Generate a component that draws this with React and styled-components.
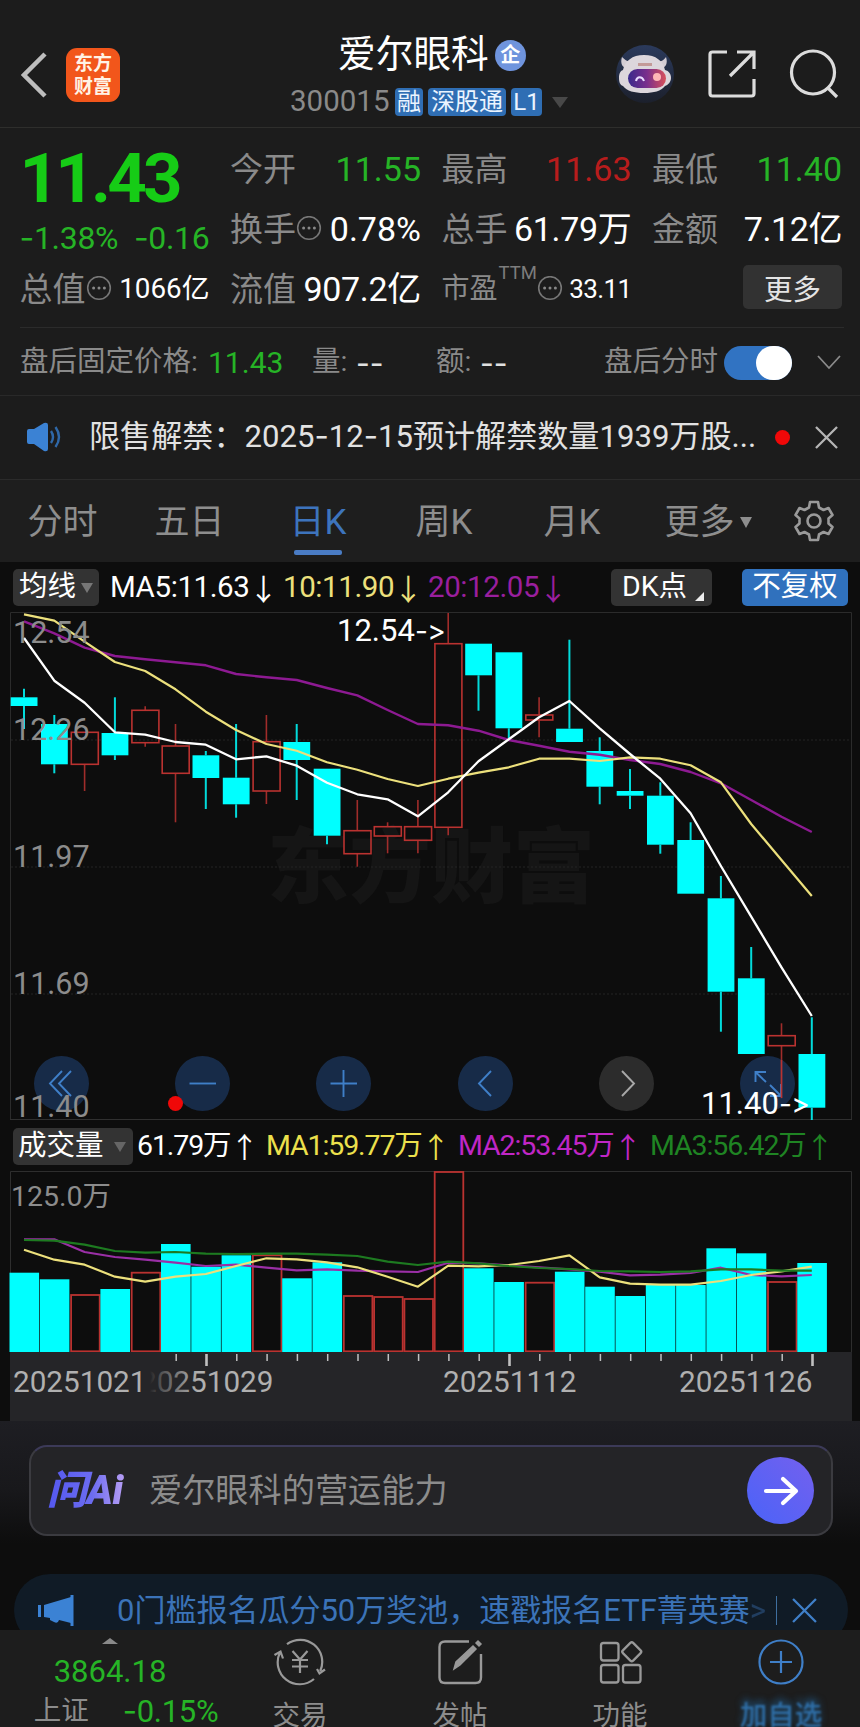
import React from 'react';
import styled, { createGlobalStyle, css } from 'styled-components';

const UP = '#ba3230';
const DOWN = '#00ffff';
const GREEN = '#26b426';
const FONT = "Roboto, 'Noto Sans CJK SC', sans-serif";

const STEP = 30.3;
const px = (i) => 24 + i * STEP;

// [type, bodyTop, bodyBottom, high, low, volumeTop, volumeType]
const candles = [
    ['d', 697.3, 706, 688.7, 729, 1272.7],
    ['d', 724, 764.3, 715, 773.3, 1279.3],
    ['u', 732.3, 764.3, 732.3, 791, 1295],
    ['d', 733, 755.3, 697.3, 760, 1289],
    ['u', 710.3, 742.7, 706.3, 746.7, 1272.7],
    ['u', 746, 773.3, 724, 822.3, 1244, 'd'],
    ['d', 755.3, 778, 751, 809, 1266.7],
    ['d', 777.7, 804.3, 724, 817.7, 1255.3],
    ['u', 741.7, 791, 715, 804, 1255.3],
    ['d', 742, 760, 724, 800, 1278.3],
    ['d', 768.7, 835.7, 768.7, 844.3, 1262.3],
    ['u', 830.7, 853.7, 800, 866.7, 1296],
    ['u', 826.7, 836, 822.3, 853.3, 1297],
    ['u', 826.7, 840.3, 800, 853.3, 1299],
    ['u', 643.7, 827.3, 613, 835.3, 1172],
    ['d', 643.7, 675.3, 643.7, 710.7, 1268.3],
    ['d', 652.3, 728.3, 652.3, 738, 1282],
    ['u', 715, 720, 697.3, 737.3, 1282.7],
    ['d', 728.7, 742, 639.7, 742, 1271.7],
    ['d', 751, 786.7, 737.3, 804.3, 1286.7],
    ['d', 791, 795.7, 769, 809, 1296],
    ['d', 795.7, 844.7, 782.3, 853.7, 1285],
    ['d', 840, 893.7, 822.3, 893.7, 1285],
    ['d', 898.3, 991.7, 876, 1031.7, 1248.3],
    ['d', 978.3, 1054, 947, 1054, 1253.3],
    ['u', 1035.7, 1045.7, 1023.3, 1098.3, 1282],
    ['d', 1054, 1107.7, 1017.3, 1120, 1263]
];

const ma5 = [638, 680.7, 702.7, 732.3, 734.7, 742, 744.7, 759.3, 756.3, 765.7, 782.7, 794.3, 799.3, 816.3, 792.3, 761.3, 739.3, 717.3, 701, 728.3, 754, 778.7, 813.3, 866, 916.7, 967.3, 1016];
const ma10 = [614.3, 620.7, 641.7, 662, 671, 689.3, 711.7, 730, 744, 750.7, 762.3, 769.7, 779, 786, 778.7, 772.7, 767.3, 758.7, 758.7, 761, 757.3, 758.7, 765.3, 782.3, 824, 860, 896];
const ma20 = [621.3, 633.3, 647.7, 656, 659.3, 662.3, 665.3, 674, 677.3, 680, 688, 695.3, 710, 724, 725.3, 730.7, 740, 745.7, 751.7, 754.7, 760, 764, 772, 783.3, 800, 816.7, 832];
const vol1 = [1249.7, 1259.7, 1264.7, 1276.7, 1281.7, 1276.7, 1274, 1266, 1258.3, 1259.3, 1262.3, 1267.3, 1276.7, 1286.7, 1265.7, 1266.3, 1265, 1261, 1255.3, 1277.3, 1283.7, 1284.7, 1284.7, 1281, 1275, 1271.3, 1266.7];
const vol2 = [1239.3, 1239.3, 1252, 1257, 1259.7, 1262.7, 1266, 1264.7, 1267.7, 1270.3, 1269.3, 1270.7, 1271.3, 1272, 1262.7, 1263.3, 1265.3, 1267.3, 1269.3, 1271.7, 1275.3, 1274.7, 1273, 1267.7, 1275, 1276.3, 1275];
const vol3 = [1240, 1240.7, 1244.7, 1251, 1252.7, 1252, 1253.7, 1254, 1253.7, 1253.7, 1254.7, 1256, 1261.7, 1265, 1261.7, 1263.3, 1266, 1268, 1269, 1271, 1271.3, 1272, 1271.3, 1269.3, 1269.3, 1270.7, 1270.7];

const Line = ({ data, color, width = 2 }) => (
    <polyline
        points={data.map((y, i) => `${px(i)},${y}`).join(' ')}
        fill="none"
        stroke={color}
        strokeWidth={width}
        strokeLinejoin="round"
    />
);

const Candle = ({ item, index }) => {
    const [type, top, bottom, high, low] = item;
    const x = px(index);
    const color = type === 'u' ? UP : DOWN;
    return (
        <g stroke={color} strokeWidth={type === 'u' ? 1.6 : 2}>
            <line x1={x} x2={x} y1={high} y2={top} opacity="0.85" />
            <line x1={x} x2={x} y1={bottom} y2={low} opacity="0.85" />
            {type === 'u' ? (
                <rect x={x - 13.3} y={top} width="27" height={bottom - top} fill="none" />
            ) : (
                <rect x={x - 13.3} y={top} width="26.8" height={bottom - top} fill={color} stroke="none" />
            )}
        </g>
    );
};

const KLineChart = () => (
    <Svg viewBox="0 612 860 508" width="860" height="508">
        <text x="267" y="896" fontSize="82" fontWeight="900" fill="#151515">
            东方财富
        </text>
        <path d="M10.5 1120 V612.5 H851.5 V1120" fill="none" stroke="#2b2b2b" />
        <line x1="10" x2="852" y1="1119.5" y2="1119.5" stroke="#303030" />
        <g stroke="#242424" strokeDasharray="2 2">
            <line x1="11" x2="851" y1="740" y2="740" />
            <line x1="11" x2="851" y1="867" y2="867" />
            <line x1="11" x2="851" y1="994" y2="994" />
        </g>
        {candles.map((item, index) => (
            <Candle key={index} item={item} index={index} />
        ))}
        <Line data={ma20} color="#8d1a92" width={2.4} />
        <Line data={ma10} color="#ece07c" width={2.2} />
        <Line data={ma5} color="#ffffff" width={2.3} />
        <g fontSize="30.5" fill="#8c8c8c">
            <text x="13" y="642.5">12.54</text>
            <text x="13" y="739.5">12.26</text>
            <text x="13" y="867">11.97</text>
            <text x="13" y="994">11.69</text>
        </g>
        <text x="337" y="641" fontSize="31" fill="#fff">
            12.54<Pointer fontSize="28">-&gt;</Pointer>
        </text>
    </Svg>
);

const VolumeChart = () => (
    <Svg viewBox="0 1171 860 181" width="860" height="181">
        <path d="M10.5 1352 V1171.5 H851.5 V1352" fill="none" stroke="#2e2e2e" />
        {candles.map(([type, , , , , top, volType = type], i) =>
            volType === 'u' ? (
                <rect key={i} x={px(i) - 13.5} y={top} width="28.6" height={1351.3 - top} fill="none" stroke={UP} strokeWidth="1.8" />
            ) : (
                <rect key={i} x={px(i) - 14.5} y={top} width="29.6" height={1352 - top} fill={DOWN} />
            )
        )}
        <Line data={vol2} color="#9a2fa6" width={2.2} />
        <Line data={vol1} color="#ece07c" width={2.2} />
        <Line data={vol3} color="#1d7a20" width={2.2} />
        <text x="11" y="1205.500" fontSize="28.500" fill="#8c8c8c">
            125.0万
        </text>
    </Svg>
);

const DateAxis = () => (
    <Svg viewBox="0 1352 860 69" width="860" height="69">
        <defs>
            <linearGradient id="dateFade" gradientUnits="userSpaceOnUse" x1="150" x2="198" y1="0" y2="0">
                <stop offset="0" stopColor="#b0b0b0" stopOpacity="0" />
                <stop offset="0.15" stopColor="#b0b0b0" stopOpacity="0.25" />
                <stop offset="1" stopColor="#b0b0b0" />
            </linearGradient>
        </defs>
        <rect x="10" y="1352" width="842" height="69" fill="#252528" />
        {candles.map((_, i) => {
            if (i < 5) return null;
            const major = i % 10 === 6;
            return (
                <line
                    key={i}
                    x1={px(i) + 0.7}
                    x2={px(i) + 0.7}
                    y1="1354"
                    y2={major ? 1366 : 1361}
                    stroke="#c0c0c0"
                    strokeWidth={major ? 2.6 : 1.5}
                />
            );
        })}
        <g fontSize="29.7" fill="#b0b0b0">
            <text x="13" y="1392">20251021</text>
            <text x="140" y="1392" fill="url(#dateFade)">20251029</text>
            <text x="443" y="1392">20251112</text>
            <text x="679" y="1392">20251126</text>
        </g>
    </Svg>
);

const More = () => (
    <svg width="26" height="26" viewBox="0 0 26 26">
        <circle cx="13" cy="12" r="11.3" fill="none" stroke="#777" strokeWidth="1.6" />
        <g fill="#888">
            <circle cx="7.6" cy="12" r="1.5" />
            <circle cx="13" cy="12" r="1.5" />
            <circle cx="18.4" cy="12" r="1.5" />
        </g>
    </svg>
);

const Cross = ({ size, color, width = 2.4 }) => (
    <svg width={size} height={size} viewBox="0 0 24 24">
        <path d="M1 1 23 23M23 1 1 23" stroke={color} strokeWidth={width} fill="none" />
    </svg>
);

const Robot = () => (
    <svg width="60" height="60" viewBox="0 0 60 60">
        <defs>
            <linearGradient id="visor">
                <stop offset="0" stopColor="#3a2a8c" />
                <stop offset="0.5" stopColor="#7a2f8c" />
                <stop offset="1" stopColor="#d8505a" />
            </linearGradient>
            <linearGradient id="halo" x2="0" y2="1">
                <stop offset="0" stopColor="#2b3a5c" />
                <stop offset="1" stopColor="#1c202c" />
            </linearGradient>
        </defs>
        <circle cx="30" cy="30" r="29" fill="url(#halo)" />
        <path d="M7 13c-2 6 0 11 6 12l6-7c-6 0-9-2-12-5zM51 13c2 6 0 11-6 12l-5-7c6 0 9-2 11-5z" fill="#d3cdd4" />
        <path d="M29 11c12 0 19 6 21 15 4 1 6 4 6 8s-3 7-6 8c-4 5-11 7-21 7s-17-2-21-7c-3-1-4-4-4-8s1-7 4-8c2-9 9-15 21-15z" fill="#dcd6dc" />
        <path d="M23 19h14v3H23z" fill="#c39a98" />
        <rect x="13" y="25" width="38" height="19" rx="9.5" fill="url(#visor)" />
        <path d="M21 37c1-5 6-5 8 0" stroke="#e8dcff" strokeWidth="2" fill="none" />
        <circle cx="42" cy="33" r="4" fill="#ffb6b6" />
    </svg>
);

const tabs = ['分时', '五日', '日K', '周K', '月K'];

const tools = [
    { d: 'M28 15 16 27.500 28 40M37 15 25 27.500 37 40', name: 'first' },
    { d: 'M14.500 27.500H41', name: 'out' },
    { d: 'M14.500 27.500H41M27.500 14V41', name: 'in' },
    { d: 'M33 15 21 27.500 33 40', name: 'prev' },
    { d: 'M23 15 35 27.500 23 40', name: 'next', dark: true },
    { d: 'M26 16H15.500V26M15.500 16 26 26M41 28V40H30M30 29 41 40', name: 'full' }
];

const App = () => {
    return (
        <Page>
            <GlobalStyle />
            <Header>
                <HeaderLeft>
                    <svg width="26" height="46" viewBox="0 0 26 46">
                        <path d="M24 2 3 23 24 44" fill="none" stroke="#bdbdbd" strokeWidth="4.500" />
                    </svg>
                    <AppLogo>
                        东方
                        <br />
                        财富
                    </AppLogo>
                </HeaderLeft>
                <TitleBox>
                    <TitleRow>
                        爱尔眼科<Badge>企</Badge>
                    </TitleRow>
                    <CodeRow>
                        <Code>300015</Code>
                        <Tag $w={28}>融</Tag>
                        <Tag $w={78}>深股通</Tag>
                        <Tag $w={31}>L1</Tag>
                        <Triangle $size={8} $h={11} $color="#484848" />
                    </CodeRow>
                </TitleBox>
                <HeaderIcons>
                    <Robot />
                    <svg width="48" height="48" viewBox="0 0 48 48" fill="none" stroke="#dcdcdc" strokeWidth="3.200">
                        <path d="M19 2H4.500Q2 2 2 4.500V43.500Q2 46 4.500 46H43.500Q46 46 46 43.500V29M29 2H46V19M46 2 22 26" />
                    </svg>
                    <svg width="50" height="50" viewBox="0 0 50 50" fill="none" stroke="#dcdcdc" strokeWidth="3.200">
                        <circle cx="24" cy="23.500" r="21.500" />
                        <path d="M38.500 38.500 48 48" />
                    </svg>
                </HeaderIcons>
            </Header>

            <Quote>
                <Column>
                    <Price>11.43</Price>
                    <Change>
                        <Num $size={32} $color={GREEN} $ls={-0.3}>
                            <Dash>-</Dash>1.38%
                        </Num>
                        <Num $size={32} $color={GREEN} $ls={-0.3}>
                            <Dash>-</Dash>0.16
                        </Num>
                    </Change>
                    <Cell>
                        <Label>总值</Label>
                        <More />
                        <Num $size={27.8}>1066亿</Num>
                    </Cell>
                </Column>
                <Column>
                    <Cell>
                        <Label>今开</Label>
                        <Num $color={GREEN}>11.55</Num>
                    </Cell>
                    <Cell>
                        <Label>换手</Label>
                        <More />
                        <Num>0.78%</Num>
                    </Cell>
                    <Cell>
                        <Label>流值</Label>
                        <Num $ls={-0.3}>907.2亿</Num>
                    </Cell>
                </Column>
                <Column>
                    <Cell>
                        <Label>最高</Label>
                        <Num $color="#b81c1c">11.63</Num>
                    </Cell>
                    <Cell>
                        <Label>总手</Label>
                        <Num $ls={-0.3}>61.79万</Num>
                    </Cell>
                    <Cell>
                        <Label $size={28}>市盈</Label>
                        <Ttm>TTM</Ttm>
                        <More />
                        <Num $size={26} $ls={-0.6}>
                            33.11
                        </Num>
                    </Cell>
                </Column>
                <Column>
                    <Cell>
                        <Label>最低</Label>
                        <Num $color={GREEN}>11.40</Num>
                    </Cell>
                    <Cell>
                        <Label>金额</Label>
                        <Num $ls={-0.4}>7.12亿</Num>
                    </Cell>
                    <Cell>
                        <MoreButton>更多</MoreButton>
                    </Cell>
                </Column>
            </Quote>

            <AfterHours>
                <span>盘后固定价格:</span>
                <Num $size={30} $color={GREEN}>11.43</Num>
                <span>量:</span>
                <Dash $bright>--</Dash>
                <span>额:</span>
                <Dash $bright>--</Dash>
                <span>盘后分时</span>
                <Toggle>
                    <Knob />
                </Toggle>
                <svg width="24" height="15" viewBox="0 0 24 15">
                    <path d="M1 1 12 13 23 1" fill="none" stroke="#8a8a8a" strokeWidth="1.800" />
                </svg>
            </AfterHours>

            <Notice>
                <svg width="37" height="30" viewBox="0 0 37 30">
                    <path d="M1 9Q1 7 3 7H8L18 1Q22 0 22 3V27Q22 30 18 29L8 22H3Q1 22 1 20Z" fill="#3b82d4" />
                    <path d="M25 9q4 6 0 12M29.500 5q7 10 0 20" fill="none" stroke="#2f68a8" strokeWidth="2.400" />
                </svg>
                <NoticeText>
                    限售解禁：2025<Dash>-</Dash>12<Dash>-</Dash>15预计解禁数量1939万股...
                </NoticeText>
                <RedDot />
                <Cross size={23} color="#b5b5b5" />
            </Notice>

            <Tabs>
                {tabs.map((name) => (
                    <Tab key={name} $active={name === '日K'}>
                        {name}
                    </Tab>
                ))}
                <Tab>
                    更多
                    <Triangle $size={6} $h={11} $color="#8e8e8e" />
                </Tab>
                <svg width="42" height="42" viewBox="0 0 42 42" fill="none" stroke="#9a9a9a" strokeWidth="2.600" strokeLinejoin="round">
                    <path d="M17 2H25L26 7.500 30.500 10 35.500 8 39.500 15 35.500 18.500V23.500L39.500 27 35.500 34 30.500 32 26 34.500 25 40H17L16 34.500 11.500 32 6.500 34 2.500 27 6.500 23.500V18.500L2.500 15 6.500 8 11.500 10 16 7.500Z" />
                    <circle cx="21" cy="21" r="6.500" />
                </svg>
            </Tabs>

            <MaRow>
                <Pill $w={86}>
                    均线
                    <Triangle $size={6} $h={10} $color="#777" />
                </Pill>
                <Series $color="#fff" $w={173}>
                    MA5:11.63<Arrow>↓</Arrow>
                </Series>
                <Series $color="#ece07c" $w={145}>
                    10:11.90<Arrow>↓</Arrow>
                </Series>
                <Series $color="#9a1f9e" $w={183}>
                    20:12.05<Arrow>↓</Arrow>
                </Series>
                <Pill $w={101}>
                    DK点
                    <Corner />
                </Pill>
                <Adjust>不复权</Adjust>
            </MaRow>

            <ChartBox>
                <KLineChart />
                <Tools>
                    {tools.map((tool) => (
                        <Tool key={tool.name} $dark={tool.dark}>
                            <svg width="55" height="55" viewBox="0 0 55 55">
                                <path d={tool.d} fill="none" stroke={tool.dark ? '#a8a8a8' : '#3f7fc8'} strokeWidth="1.900" />
                            </svg>
                            {tool.name === 'out' && <ToolDot />}
                        </Tool>
                    ))}
                </Tools>
                <Floor>
                    <Svg viewBox="0 1060 860 70" width="860" height="70">
                        <line x1={px(25)} x2={px(25)} y1="1060" y2="1098" stroke={UP} strokeWidth="1.600" />
                        <text x="13" y="1117" fontSize="30.500" fill="#8c8c8c">
                            11.40
                        </text>
                        <text x="701" y="1114" fontSize="31" fill="#fff">
                            11.40<Pointer fontSize="28">-&gt;</Pointer>
                        </text>
                    </Svg>
                </Floor>
            </ChartBox>

            <VolRow>
                <Pill $w={120} $spread>
                    成交量
                    <Triangle $size={6} $h={10} $color="#666" />
                </Pill>
                <Series $color="#fff" $w={129} $vol>
                    61.79万<Arrow>↑</Arrow>
                </Series>
                <Series $color="#ece04c" $w={192} $vol>
                    MA1:59.77万<Arrow>↑</Arrow>
                </Series>
                <Series $color="#c026c6" $w={192} $vol>
                    MA2:53.45万<Arrow>↑</Arrow>
                </Series>
                <Series $color="#1f8423" $w={190} $vol>
                    MA3:56.42万<Arrow>↑</Arrow>
                </Series>
            </VolRow>
            <VolumeChart />
            <DateAxis />

            <AiSection>
                <AiBox>
                    <AiLogo>问Ai</AiLogo>
                    <AiText>爱尔眼科的营运能力</AiText>
                    <AiButton>
                        <svg width="36" height="32" viewBox="0 0 36 32">
                            <path d="M3 16H33M20 4 33 16 20 28" fill="none" stroke="#fff" strokeWidth="4.200" strokeLinecap="round" strokeLinejoin="round" />
                        </svg>
                    </AiButton>
                </AiBox>
            </AiSection>

            <PromoWrap>
                <Promo>
                    <svg width="38" height="33" viewBox="0 0 38 33" fill="#3b82d4">
                        <path d="M1 11H4V23H1zM7 11 34 3V29L22 26Q21 30 17 28L13 26V24L7 23Z" />
                        <path d="M33.500 1H36.500V32H33.500z" />
                    </svg>
                    <PromoText>
                        0门槛报名瓜分50万奖池，速戳报名ETF菁英赛<Faint>&gt;</Faint>
                    </PromoText>
                    <Divider />
                    <Cross size={25} color="#3f7fc8" width={2.2} />
                </Promo>
            </PromoWrap>

            <BottomBar>
                <IndexBox>
                    <Triangle $up $size={8} $h={6} $color="#8a8a8a" />
                    <Num $size={31} $color={GREEN}>3864.18</Num>
                    <IndexRow>
                        上证
                        <Num $size={31} $color={GREEN} $ls={-0.3}>
                            <Dash>-</Dash>0.15%
                        </Num>
                    </IndexRow>
                </IndexBox>
                <NavItem>
                    <svg width="52" height="48" viewBox="0 0 52 48" fill="none" stroke="#999" strokeWidth="2.200">
                        <path d="M13 6.200A22 22 0 0 1 46.200 33M40 41A22 22 0 0 1 6 14.500M0.500 17 6.500 13.500 9 20.500M43 31 45.500 35.500 51 31.500" />
                        <path d="M18.500 13 26 21.500 33.500 13M26 21.500V35M18 22H34M18 28.500H34" />
                    </svg>
                    交易
                </NavItem>
                <NavItem>
                    <svg width="48" height="48" viewBox="0 0 48 48" fill="none" stroke="#999" strokeWidth="2.400">
                        <path d="M33 3.500H9Q3.500 3.500 3.500 9V39.500Q3.500 45 9 45H39.500Q45 45 45 39.500V16" />
                        <path d="M18 31 20 24 37 8 40 11 24 27Z M40 5 42 3 45 6 43 8Z" fill="#999" strokeWidth="1.500" />
                    </svg>
                    发帖
                </NavItem>
                <NavItem>
                    <svg width="48" height="48" viewBox="0 0 48 48" fill="none" stroke="#999" strokeWidth="2.300">
                        <rect x="5" y="5" width="17.500" height="17.500" rx="2.500" />
                        <rect x="5" y="27" width="17.500" height="17.500" rx="2.500" />
                        <rect x="27" y="27" width="17.500" height="17.500" rx="2.500" />
                        <rect x="28.500" y="6.500" width="14.500" height="14.500" rx="2" transform="rotate(45 35.750 13.750)" />
                    </svg>
                    功能
                </NavItem>
                <NavItem $active>
                    <svg width="48" height="48" viewBox="0 0 48 48" fill="none" stroke="#3f7fc8" strokeWidth="2.200">
                        <circle cx="25" cy="24" r="21.500" />
                        <path d="M14 24H36M25 13V35" />
                    </svg>
                    <Smudged>加自选</Smudged>
                </NavItem>
            </BottomBar>
        </Page>
    );
};

const GlobalStyle = createGlobalStyle`
    * {
        box-sizing: border-box;
    }
    body {
        margin: 0;
        background: #0d0d0d;
        font-family: ${FONT};
    }
    svg {
        flex-shrink: 0;
    }
`;

const center = css`
    display: flex;
    align-items: center;
    justify-content: center;
`;

const Page = styled.div`
    display: flex;
    flex-direction: column;
    width: 860px;
    height: 1727px;
    overflow: hidden;
    background: #0d0d0d;
    white-space: nowrap;
    line-height: 1;
`;

const Svg = styled.svg`
    display: block;
    overflow: visible;
    font-family: ${FONT};
`;

/* keeps "->" as two glyphs */
const Pointer = styled.tspan`
    font-family: Inter, sans-serif;
    font-feature-settings: 'calt' 0, 'liga' 0;
    letter-spacing: -0.5px;
`;

const Header = styled.header`
    display: grid;
    grid-template-columns: 290px 325px 1fr;
    height: 128px;
    padding-top: 20px;
    background: #1c1c1c;
    border-bottom: 1px solid #2e2e2c;
`;

const HeaderLeft = styled.div`
    display: flex;
    align-items: center;
    gap: 19px;
    padding-left: 21px;
    height: 110px;
`;

const AppLogo = styled.div`
    ${center}
    width: 54px;
    height: 54px;
    border-radius: 11px;
    background: #f2561b;
    color: #fff3e6;
    font-size: 19px;
    font-weight: 700;
    line-height: 23px;
`;

const TitleBox = styled.div`
    display: flex;
    flex-direction: column;
`;

const TitleRow = styled.div`
    display: flex;
    align-items: center;
    height: 70px;
    padding-left: 48px;
    gap: 6px;
    font-size: 37.7px;
    color: #fff;
`;

const Badge = styled.span`
    ${center}
    width: 31px;
    height: 31px;
    border-radius: 50%;
    background: #6f94dd;
    color: #fff;
    font-size: 20px;
    font-weight: 700;
`;

const CodeRow = styled.div`
    display: flex;
    align-items: center;
    height: 24px;
    gap: 5px;
`;

const Code = styled.span`
    width: 100px;
    font-size: 29.5px;
    color: #8a8a8a;
`;

const Tag = styled.span`
    ${center}
    width: ${(props) => props.$w}px;
    height: 28px;
    border-radius: 4px;
    background: #2f6eb4;
    color: #eaf4ff;
    font-size: 24px;
`;

const Triangle = styled.i`
    width: 0;
    height: 0;
    margin-left: 5px;
    border: ${(props) => props.$size}px solid transparent;
    border-bottom-width: 0;
    border-top: ${(props) => props.$h}px solid ${(props) => props.$color};
    ${(props) =>
        props.$up &&
        css`
            margin: 0;
            border-top: 0;
            border-bottom: ${props.$h}px solid ${props.$color};
        `}
`;

const HeaderIcons = styled.div`
    display: flex;
    align-items: center;
    height: 108px;
    gap: 33px;
`;

const Quote = styled.section`
    display: grid;
    grid-template-columns: 190px 191px 190px 190px;
    column-gap: 20.5px;
    height: 200px;
    padding: 11px 0 0 19.5px;
    background: linear-gradient(#2b2b2b, #2b2b2b) 20px 100% / 824px 1px no-repeat #1c1c1c;
`;

const Column = styled.div`
    display: flex;
    flex-direction: column;
`;

const Price = styled.div`
    display: flex;
    align-items: center;
    height: 78px;
    font-size: 69px;
    font-weight: 700;
    letter-spacing: -3.8px;
    color: #16cc16;
`;

const Change = styled.div`
    display: flex;
    align-items: center;
    justify-content: space-between;
    height: 42px;
`;

const Cell = styled.div`
    display: flex;
    align-items: center;
    height: 60px;
`;

const Label = styled.span`
    font-size: ${(props) => props.$size || 33}px;
    color: #8a8a8a;
`;

const Num = styled.span`
    font-size: ${(props) => props.$size || 34}px;
    letter-spacing: ${(props) => props.$ls || 0}px;
    color: ${(props) => props.$color || '#fff'};
    ${Cell} & {
        margin-left: auto;
    }
`;

const Dash = styled.span`
    font-family: Inter, sans-serif;
    color: ${(props) => (props.$bright ? '#e0e0e0' : 'inherit')};
    ${(props) => props.$bright && 'font-size: 30px;'}
`;

const Ttm = styled.span`
    align-self: flex-start;
    margin: 5px 0 0 1px;
    font-size: 18.5px;
    color: #7d7d7d;
`;

const MoreButton = styled.button`
    ${center}
    width: 99px;
    height: 44px;
    margin: 0 0 4px auto;
    padding: 0;
    border: none;
    border-radius: 5px;
    background: #323232;
    color: #e4e4e4;
    font-family: ${FONT};
    font-size: 28.5px;
`;

const AfterHours = styled.section`
    display: grid;
    grid-template-columns: 188px 104px 44px 80px 44px 124px 120px 93px 1fr;
    align-items: center;
    height: 68px;
    padding: 2px 0 0 20px;
    background: #1c1c1c;
    border-bottom: 1px solid #292929;
    color: #8a8a8a;
    font-size: 28.5px;
`;

const Toggle = styled.span`
    display: flex;
    justify-content: flex-end;
    width: 68px;
    height: 34px;
    border-radius: 17px;
    background: #3173c2;
`;

const Knob = styled.span`
    width: 36px;
    height: 34px;
    border-radius: 17px;
    background: #fff;
`;

const Notice = styled.div`
    display: grid;
    grid-template-columns: 63px 686px 40px 1fr;
    align-items: center;
    height: 84px;
    padding: 0 0 1px 26px;
    background: #1c1c1c;
    border-bottom: 1px solid #2b2b2b;
`;

const NoticeText = styled.div`
    font-size: 31.1px;
    color: #e2e2e2;
`;

const RedDot = styled.span`
    width: 15px;
    height: 15px;
    border-radius: 50%;
    background: #f00808;
`;

const Tabs = styled.nav`
    display: grid;
    grid-template-columns: 127px 135px 126px 128px 121px 128px 1fr;
    align-items: center;
    height: 82px;
    padding-left: 27.5px;
    background: #1e1e1e;
`;

const Tab = styled.div`
    display: flex;
    align-items: center;
    position: relative;
    height: 82px;
    padding-top: 2px;
    font-size: 35px;
    color: ${(props) => (props.$active ? '#3d74bd' : '#8e8e8e')};
    ${(props) =>
        props.$active &&
        css`
            &::after {
                content: '';
                position: absolute;
                left: 4px;
                bottom: 7px;
                width: 48px;
                height: 5px;
                border-radius: 2px;
                background: #4a7cc4;
            }
        `}
`;

const MaRow = styled.div`
    display: flex;
    align-items: center;
    height: 50px;
    padding: 1px 0 0 13px;
`;

const VolRow = styled(MaRow)`
    height: 51px;
    padding-top: 2px;
`;

const Pill = styled.div`
    display: flex;
    align-items: center;
    justify-content: ${(props) => (props.$spread ? 'space-between' : 'center')};
    flex-shrink: 0;
    width: ${(props) => props.$w}px;
    height: 37px;
    padding: ${(props) => (props.$spread ? '0 7px 0 5px' : '0 7px')};
    border-radius: 5px;
    background: #333;
    color: #fff;
    font-size: 28.5px;
`;

const Series = styled.div`
    display: flex;
    align-items: center;
    flex-shrink: 0;
    width: ${(props) => props.$w}px;
    font-size: ${(props) => (props.$vol ? 28.5 : 29.5)}px;
    letter-spacing: ${(props) => (props.$vol ? -1.1 : -0.4)}px;
    color: ${(props) => props.$color};
    ${Pill} + & {
        margin-left: ${(props) => (props.$vol ? 4 : 11)}px;
    }
`;

const Arrow = styled.span`
    ${center}
    width: 20px;
    margin-left: 4px;
    font-family: 'Noto Sans CJK SC', sans-serif;
    letter-spacing: 0;
`;

const Corner = styled.i`
    align-self: flex-end;
    margin: 0 -3px 5px 8px;
    border-left: 9px solid transparent;
    border-bottom: 9px solid #eee;
`;

const Adjust = styled(Pill)`
    width: 106px;
    margin-left: 30px;
    background: #3071bd;
`;

const ChartBox = styled.div`
    position: relative;
    height: 508px;
`;

/* floating chart controls */
const Tools = styled.div`
    position: absolute;
    left: 34px;
    right: 65px;
    bottom: 9px;
    display: flex;
    justify-content: space-between;
`;

const Tool = styled.div`
    position: relative;
    width: 55px;
    height: 55px;
    border-radius: 50%;
    background: ${(props) => (props.$dark ? '#2c2c2c' : 'rgba(29, 60, 104, 0.65)')};
`;

const ToolDot = styled(RedDot)`
    position: absolute;
    left: -7px;
    bottom: 0;
`;

const Floor = styled.div`
    position: absolute;
    left: 0;
    top: 448px;
`;

const AiSection = styled.section`
    height: 153px;
    padding: 24px 27px 0 29px;
    background: linear-gradient(#1e1e23 0, #18181b 45%, #0d0d0d 80%);
`;

const AiBox = styled.div`
    display: flex;
    align-items: center;
    height: 91px;
    padding: 0 17px 0 15px;
    border: 2px solid #3b3b40;
    border-top-color: #3c3a58;
    border-radius: 18px;
    background: #242427;
`;

const AiLogo = styled.span`
    width: 103px;
    padding-left: 1px;
    font-size: 40px;
    font-weight: 900;
    font-style: italic;
    line-height: 46px;
    letter-spacing: -0.5px;
    color: transparent;
    background: linear-gradient(90deg, #5357f0, #6c6cf0 45%, #b49cf4 75%);
    background-clip: text;
`;

const AiText = styled.span`
    font-size: 33.2px;
    color: #8c8c8c;
`;

const AiButton = styled.div`
    ${center}
    width: 67px;
    height: 67px;
    margin-left: auto;
    border-radius: 50%;
    background: linear-gradient(45deg, #4a63f8, #7460ee);
`;

const PromoWrap = styled.div`
    height: 56px;
    padding: 0 12px 0 14px;
    overflow: hidden;
`;

const Promo = styled.div`
    display: flex;
    align-items: center;
    height: 72px;
    padding: 0 31px 0 23px;
    border-radius: 36px;
    background: #101b26;
`;

const PromoText = styled.span`
    width: 659px;
    margin-left: 42px;
    font-size: 31px;
    color: #3b73b8;
`;

const Faint = styled.span`
    opacity: 0.4;
`;

const Divider = styled.i`
    width: 1px;
    height: 29px;
    margin: 0 15px 0 1px;
    background: #3f6f9f;
`;

const BottomBar = styled.footer`
    display: grid;
    grid-template-columns: 220px 160px 160px 160px 160px;
    height: 97px;
    background: #1d1d1d;
`;

const IndexBox = styled.div`
    display: flex;
    flex-direction: column;
    align-items: center;
    padding-top: 8px;
    ${Num} {
        margin: 12px 0 0;
    }
`;

const IndexRow = styled.div`
    display: flex;
    align-items: center;
    gap: 34px;
    margin-left: 32px;
    padding-top: 8px;
    font-size: 27.5px;
    color: #8c8c8c;
    && ${Num} {
        margin: 0;
    }
`;

const NavItem = styled.div`
    display: flex;
    flex-direction: column;
    align-items: center;
    padding-top: 8px;
    gap: 16px;
    font-size: 27.5px;
    color: ${(props) => (props.$active ? '#2f6fa8' : '#8c8c8c')};
`;

/* the label sits under a soft translucent smear */
const Smudged = styled.span`
    margin-left: 2px;
    font-weight: 500;
    filter: blur(1px);
    text-shadow: 0 -4px 6px #1f5078;
`;

export default App;
